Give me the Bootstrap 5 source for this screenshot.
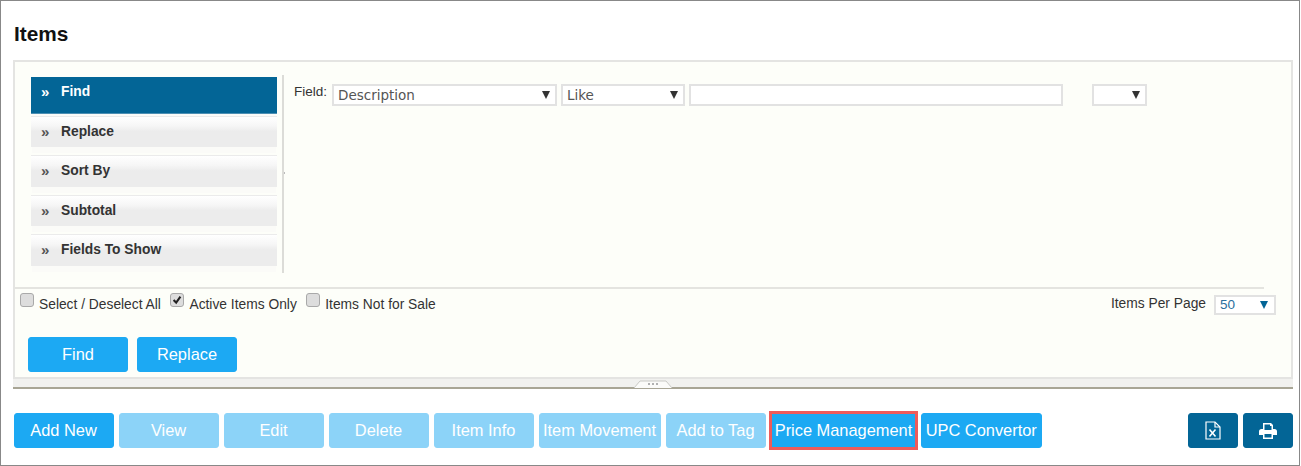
<!DOCTYPE html>
<html lang="en"><head><meta charset="utf-8"><title>Items</title>
<link href="https://cdn.jsdelivr.net/npm/bootstrap@5.3.0/dist/css/bootstrap.min.css" rel="stylesheet">
<style>
html,body{height:466px;overflow:hidden;background:#fff}
body{font-family:"Liberation Sans",Arial,sans-serif;color:#333;font-size:13.8px}
.frame{width:1300px;height:466px;border:1px solid #888;padding:0 6px 0 12px;background:#fff}
.page-title{font-size:20.8px;font-weight:700;color:#111;margin:0;line-height:24px;padding-top:21px;height:59px;margin-left:1px}
.panel-box{height:319px;background:#fdfef9;border:2px solid #e4e4e2}
.top-area{height:225px;padding:13px 0 0 16px}
.tabs{width:246px;margin-top:2px}
.tab-item{display:flex;align-items:flex-start;height:31.5px;margin-bottom:8px;padding:6px 0 0 10px;font-weight:700;font-size:13.8px;color:#333;line-height:17px;background:linear-gradient(#fff 0,#f6f6f6 30%,#ececec 48%,#ececec 100%);border-top:1px solid #ebebeb;box-shadow:0 7px 0 -1px #fbfbf8}
.tab-item.on{height:37px;margin-bottom:1.700px;background:#036596;color:#fff;border:0;border-bottom:1px solid #4d8fb3;padding-top:6px}
.chev{width:20px;font-size:15px;line-height:17px;font-weight:700;color:#555}
.tab-item.on .chev{color:#fff}
.rule-v{width:2px;height:198px;background:#dcdcd8;margin:0 0 0 5px;position:relative}
.rule-v::after{content:"";position:absolute;left:2px;top:97px;width:1px;height:2px;background:#bbb}
.fields{padding:9px 0 0 10px;gap:4px}
.lbl{font-size:13.5px;line-height:17px;color:#333;margin-right:1px;margin-top:-1px}
.sel-wrap{position:relative;display:block;height:22px}
.sel-wrap select,.txt-in{appearance:none;-webkit-appearance:none;display:block;width:100%;height:22px;border:2px solid #e2e2e2;background:#fff;padding:0 0 0 4px;font-family:"DejaVu Sans",sans-serif;font-size:13.5px;color:#555;border-radius:0;outline:0;line-height:18px}
.sel-wrap::after{content:"";position:absolute;right:7px;top:7px;border-style:solid;border-color:#333 transparent transparent;border-width:8px 4px 0}
.w-a{width:225px}.w-b{width:124px}.w-c{width:374px}.w-d{width:55px;margin-left:25px}
.rule-h{height:2px;background:#e4e4e0;width:1249px}
.opts{height:48px;padding:2px 15px 0 5px}
.opt{display:flex;align-items:flex-start;margin-right:9.500px}
.opt label{line-height:17px;padding-top:5px;margin-left:5px}
.opt .form-check-input{width:14px;height:14px;margin:2px 0 0;background-color:#ddd;border:1px solid #a9a9a9;border-radius:3px;flex:none}
.opt .form-check-input:checked{background-color:#ddd;border-color:#a9a9a9;background-image:url("data:image/svg+xml,%3csvg xmlns='http://www.w3.org/2000/svg' viewBox='0 0 14 14'%3e%3cpath fill='none' stroke='%23222' stroke-width='2.4' d='M3 7l3 3 5-7'/%3e%3c/svg%3e")}
.pp-box{padding-top:4px}
.pp-lbl{line-height:17px;margin-right:8px}
.pp-sel{width:62px;height:20px}
.pp-sel select{height:20px;color:#2a6f9e;padding-left:4px;font-family:"Liberation Sans",sans-serif;line-height:16px}
.pp-sel::after{border-top-color:#036596;top:6px;right:8px}
.act-btn{height:35px;width:100px;padding:0;font-size:16.4px;line-height:33px;border:1px solid #1ca9f3;background:#1ca9f3;color:#fff;border-radius:3px;font-family:"Liberation Sans",sans-serif;white-space:nowrap;flex:none}
.act-btn:disabled{background:#1ca9f3;border-color:#1ca9f3;color:#fff;opacity:.5}
.find-row{padding-left:13px;gap:9px}
.splitter{height:10px;background:#f1f1ef;border-bottom:2px solid #a8a595;position:relative}
.grip{position:absolute;left:620px;top:1px;display:block}
.bottom{padding:24px 0 0;gap:5px;margin-left:.5px}
.highlight{height:39px;margin:-2px 0 0 -1.5px;width:149px;border:3px solid #ee5b5b;border-radius:0}
.highlight:hover{border-color:#ee5b5b}
.w-mv{width:122px}.w-upc{width:120.500px;margin-left:-2px}
.ic-btn{width:50px;height:35px;background:#036596;border:1px solid #036596;border-radius:3px;padding:0;display:flex;align-items:center;justify-content:center;color:#fff}
</style></head>
<body>
<div class="frame">
<h1 class="page-title">Items</h1>
<div class="panel-box">
 <div class="top-area d-flex">
  <div class="tabs">
   <div class="tab-item on"><span class="chev">»</span>Find</div>
   <div class="tab-item"><span class="chev">»</span>Replace</div>
   <div class="tab-item"><span class="chev">»</span>Sort By</div>
   <div class="tab-item"><span class="chev">»</span>Subtotal</div>
   <div class="tab-item"><span class="chev">»</span>Fields To Show</div>
  </div>
  <div class="rule-v"></div>
  <div class="fields d-flex align-items-start">
   <span class="lbl">Field:</span>
   <span class="sel-wrap w-a"><select aria-label="Field"><option>Description</option></select></span>
   <span class="sel-wrap w-b"><select aria-label="Operator"><option>Like</option></select></span>
   <input class="txt-in w-c" type="text" aria-label="Value">
   <span class="sel-wrap w-d"><select aria-label="Logic"><option></option></select></span>
  </div>
 </div>
 <div class="rule-h"></div>
 <div class="opts d-flex align-items-start">
  <div class="opt"><input class="form-check-input" type="checkbox" id="c1"><label for="c1">Select / Deselect All</label></div>
  <div class="opt"><input class="form-check-input" type="checkbox" id="c2" checked><label for="c2">Active Items Only</label></div>
  <div class="opt"><input class="form-check-input" type="checkbox" id="c3"><label for="c3">Items Not for Sale</label></div>
  <div class="ms-auto d-flex align-items-start pp-box"><span class="pp-lbl">Items Per Page</span><span class="sel-wrap pp-sel"><select aria-label="Items per page"><option>50</option></select></span></div>
 </div>
 <div class="find-row d-flex">
  <button class="btn act-btn" type="button">Find</button>
  <button class="btn act-btn" type="button">Replace</button>
 </div>
</div>
<div class="splitter"><svg class="grip" width="40" height="8" viewBox="0 0 40 8" aria-hidden="true"><path d="M1 8 L7 1 H33 L39 8" fill="#fbfbf9" stroke="#c9c9c5"/><path d="M15 4h2M19 4h2M23 4h2" stroke="#999" stroke-width="1.4"/></svg></div>
<div class="bottom d-flex align-items-start">
 <button class="btn act-btn" type="button">Add New</button>
 <button class="btn act-btn" type="button" disabled>View</button>
 <button class="btn act-btn" type="button" disabled>Edit</button>
 <button class="btn act-btn" type="button" disabled>Delete</button>
 <button class="btn act-btn" type="button" disabled>Item Info</button>
 <button class="btn act-btn w-mv" type="button" disabled>Item Movement</button>
 <button class="btn act-btn" type="button" disabled>Add to Tag</button>
 <button class="btn act-btn highlight" type="button">Price Management</button>
 <button class="btn act-btn w-upc" type="button">UPC Convertor</button>
 <button class="ic-btn ms-auto" type="button" aria-label="Export to Excel"><svg width="16" height="19" viewBox="0 0 16 19" fill="none" stroke="#fff" stroke-width="1.2"><path d="M1 1h9l5 5v12H1z"/><path d="M10 1v5h5"/><path d="M4.500 8.500l6 7M10.500 8.500l-6 7" stroke-width="1.6"/></svg></button>
 <button class="ic-btn" type="button" aria-label="Print"><svg width="18" height="16" viewBox="0 0 18 16" fill="#fff"><path fill-rule="evenodd" d="M4 0h8l2 2v4h1.500A2.500 2.500 0 0 1 18 8.500V12h-4v4H4v-4H0V8.500A2.500 2.500 0 0 1 2.500 6H4zM5.500 1.500V7h7V3h-1.500V1.500zM5.500 11v3.500h7V11z"/></svg></button>
</div>
</div>
<script src="https://cdn.jsdelivr.net/npm/bootstrap@5.3.0/dist/js/bootstrap.bundle.min.js"></script>
</body></html>
